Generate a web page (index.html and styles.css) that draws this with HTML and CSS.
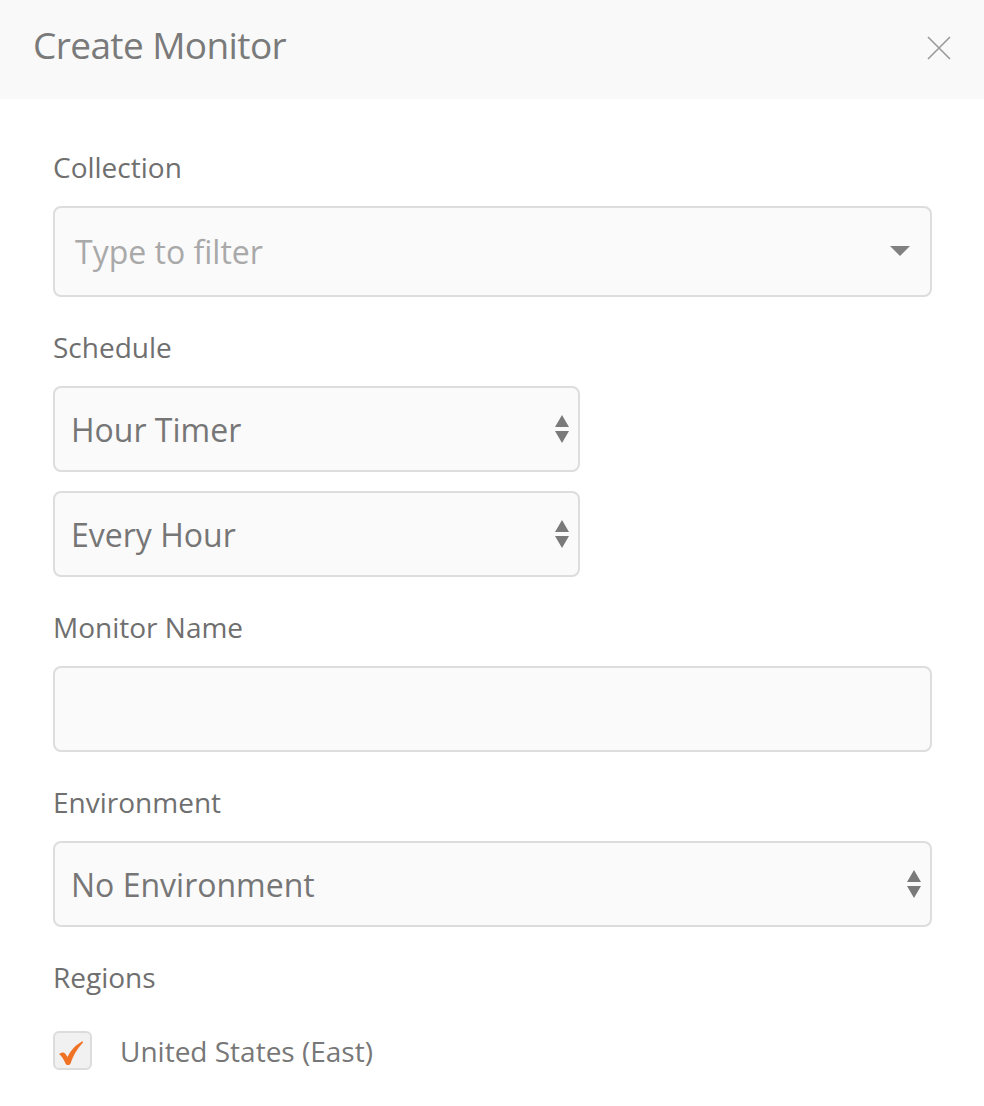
FILE: index.html
```html
<!DOCTYPE html>
<html>
<head>
<meta charset="utf-8">
<link rel="stylesheet" href="styles.css">
</head>
<body>
<div class="modal">
  <div class="header">
    <div class="title">Create Monitor</div>
    <svg class="close" width="26" height="26" viewBox="0 0 26 26"><path d="M2 2 L24 24 M24 2 L2 24" stroke="#9a9a9a" stroke-width="1.6" fill="none"/></svg>
  </div>
  <div class="body">
    <div class="label">Collection</div>
    <div class="field field-collection">
      <span class="placeholder">Type to filter</span>
      <svg class="caret" width="20" height="12" viewBox="0 0 20 12"><path d="M0 1 L20 1 L10 11 Z" fill="#808080"/></svg>
    </div>

    <div class="label">Schedule</div>
    <div class="field select half">
      <span class="value">Hour Timer</span>
      <svg class="updown" width="16" height="28" viewBox="0 0 16 28"><path d="M8 0 L15 12 L1 12 Z M1 16 L15 16 L8 28 Z" fill="#7a7a7a"/></svg>
    </div>
    <div class="field select half second">
      <span class="value">Every Hour</span>
      <svg class="updown" width="16" height="28" viewBox="0 0 16 28"><path d="M8 0 L15 12 L1 12 Z M1 16 L15 16 L8 28 Z" fill="#7a7a7a"/></svg>
    </div>

    <div class="label">Monitor Name</div>
    <div class="field"></div>

    <div class="label">Environment</div>
    <div class="field select">
      <span class="value">No Environment</span>
      <svg class="updown" width="16" height="28" viewBox="0 0 16 28"><path d="M8 0 L15 12 L1 12 Z M1 16 L15 16 L8 28 Z" fill="#7a7a7a"/></svg>
    </div>

    <div class="label">Regions</div>
    <div class="region">
      <div class="checkbox">
        <svg class="check" width="26" height="26" viewBox="0 0 26 26"><path d="M1 14 C3.5 12 6 12 7.5 14 L9.5 17 C13 10 17.5 5 24 1.5 C25 1.2 25.5 2 24.8 2.8 C19 9 15 16 12.5 23.5 C11.5 25.5 8.5 25.5 7.5 23.5 C5.8 19.5 3.8 16.2 1 14 Z" fill="#f07224"/></svg>
      </div>
      <span class="region-name">United States (East)</span>
    </div>
  </div>
</div>
</body>
</html>
```

FILE: styles.css
```css
html, body {
  margin: 0;
  padding: 0;
  background: #ffffff;
}
body {
  font-family: "Open Sans", "Liberation Sans", sans-serif;
  color: #757575;
}
.modal {
  width: 984px;
}
.header {
  height: 99px;
  background: #f9f9f9;
  display: flex;
  align-items: center;
  justify-content: space-between;
  padding: 0 32px 0 33px;
  box-sizing: border-box;
}
.title {
  font-size: 37px;
  color: #7a7a7a;
  letter-spacing: -0.6px;
  margin-top: -10px;
}
.close {
  margin-top: -4px;
}
.body {
  padding: 48px 52px 0 53px;
}
.label {
  font-size: 28px;
  line-height: 40px;
  color: #6f6f6f;
  margin-bottom: 19px;
}
.field {
  height: 86px;
  box-sizing: border-box;
  border: 2px solid #dddddd;
  border-radius: 8px;
  background: #fafafa;
  display: flex;
  align-items: center;
  margin-bottom: 30px;
}
.field-collection {
  height: 91px;
  padding: 0 20px 0 20px;
  justify-content: space-between;
}
.placeholder {
  font-size: 32px;
  color: #a9a9a9;
}
.caret {
  margin-top: -2px;
}
.select {
  padding: 0 8px 0 16px;
  justify-content: space-between;
}
.value {
  font-size: 32px;
  color: #767676;
}
.half {
  width: 527px;
}
.half.second {
  margin-top: -11px;
}
.region {
  display: flex;
  align-items: center;
  margin-top: 34px;
}
.checkbox {
  width: 39px;
  height: 39px;
  box-sizing: border-box;
  border: 2px solid #dcdcdc;
  border-radius: 6px;
  background: #f1f1f1;
  display: flex;
  align-items: center;
  justify-content: center;
}
.check {
  margin-left: -4px;
  margin-top: 4px;
}
.region-name {
  font-size: 28px;
  color: #777777;
  margin-left: 28px;
}
```
